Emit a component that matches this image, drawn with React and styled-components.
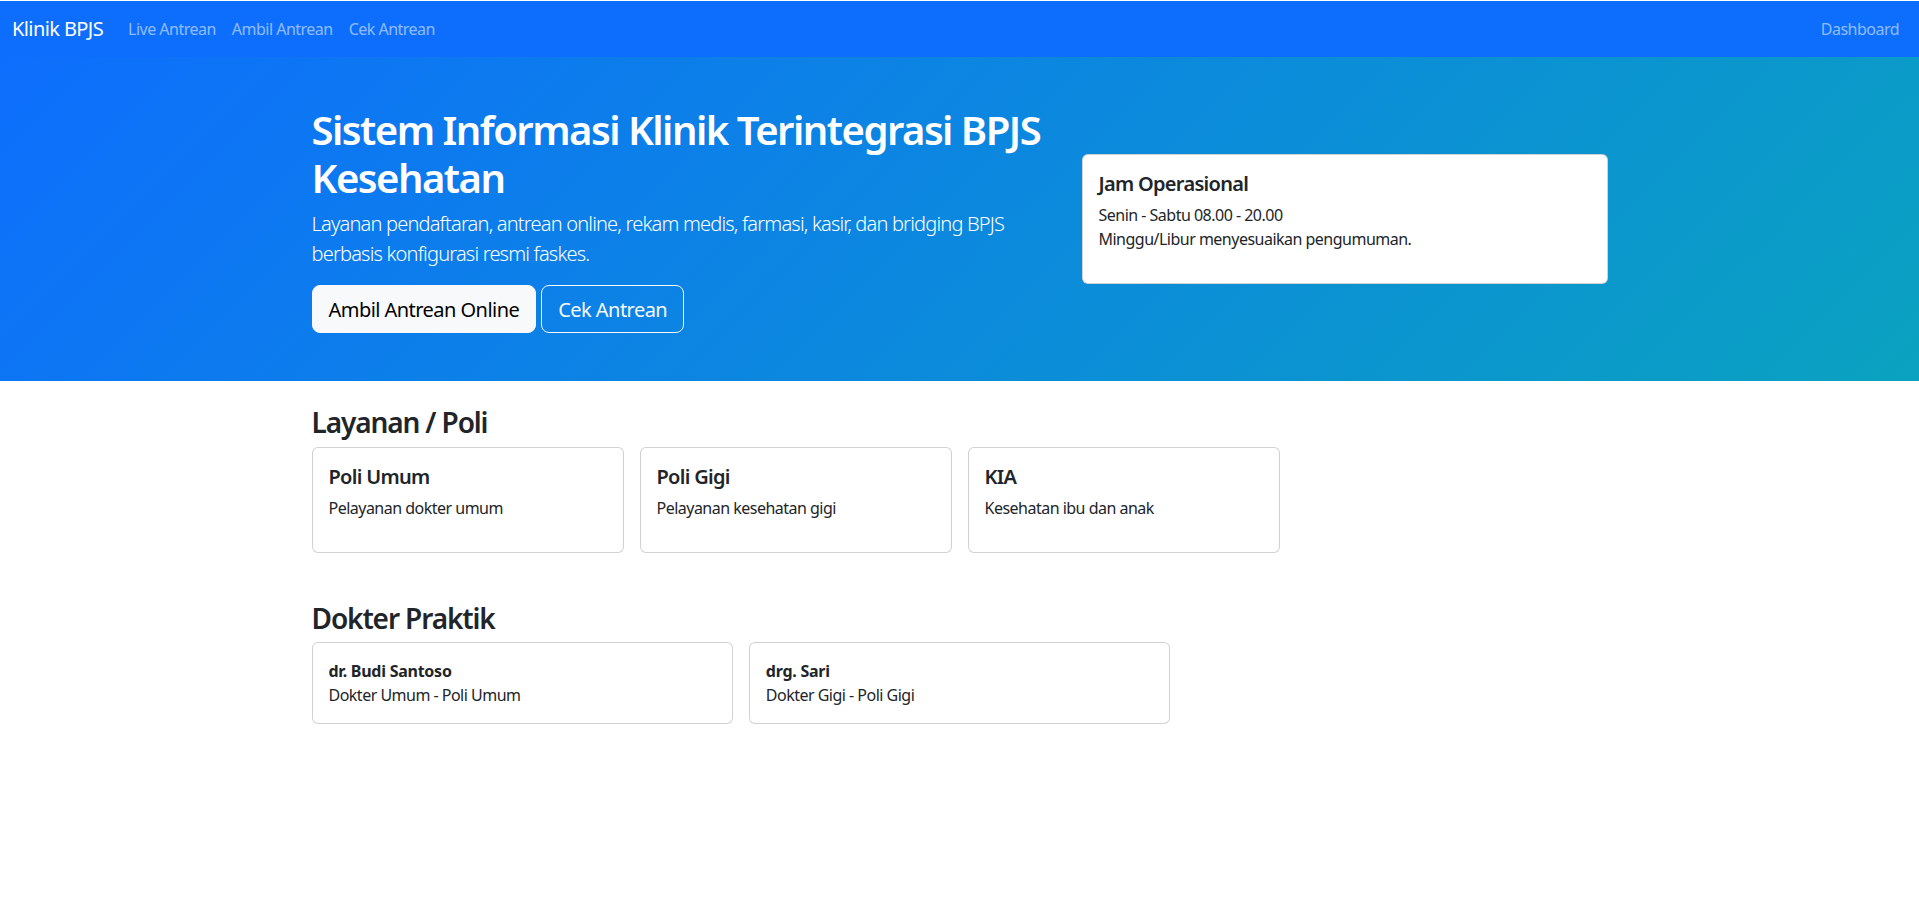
import React from 'react';
import styled, { createGlobalStyle } from 'styled-components';

const GlobalStyle = createGlobalStyle`
  * {
    box-sizing: border-box;
  }
  body {
    margin: 0;
    padding-top: 1px;
    background: #fff;
    color: #212529;
    font-family: "Noto Sans", "Open Sans", sans-serif;
    font-size: 16px;
    line-height: 1.5;
    letter-spacing: -0.032em;
  }
`;

const Navbar = styled.nav`
  display: flex;
  align-items: center;
  justify-content: space-between;
  height: 56px;
  padding: 8px 12px;
  background-color: #0d6efd;
`;

const NavLeft = styled.div`
  display: flex;
  align-items: center;
`;

const Brand = styled.a`
  margin-right: 17px;
  padding: 5px 0;
  font-size: 20px;
  letter-spacing: -0.03em;
  color: #fff;
  text-decoration: none;
`;

const NavLink = styled.a`
  padding: 8px;
  color: rgba(255, 255, 255, 0.55);
  text-decoration: none;
`;

const Hero = styled.section`
  padding: 48px 0;
  color: #fff;
  background: linear-gradient(135deg, #0d6efd, #0aa2c0);
`;

const Container = styled.div`
  width: 1320px;
  margin: 0 auto;
  padding: 0 12px;
`;

const HeroRow = styled.div`
  display: grid;
  grid-template-columns: 746px 526px;
  column-gap: 24px;
  align-items: center;
`;

const HeroTitle = styled.h1`
  margin: 0 0 7px;
  padding-top: 1px;
  font-size: 40px;
  font-weight: 600;
  line-height: 1.2;
  letter-spacing: -0.0375em;
`;

const Lead = styled.p`
  margin: 0 0 16px;
  font-size: 20px;
  font-weight: 300;
  letter-spacing: -0.04em;
`;

const Actions = styled.div`
  display: flex;
  gap: 5px;
`;

const HeroButton = styled.a`
  padding: 9px 16px 7px;
  border: 1px solid #f8f9fa;
  border-radius: 8px;
  font-size: 20px;
  line-height: 30px;
  letter-spacing: -0.027em;
  color: ${(p) => (p.$light ? '#000' : '#f8f9fa')};
  background-color: ${(p) => (p.$light ? '#f8f9fa' : 'transparent')};
  text-decoration: none;
`;

const Card = styled.div`
  padding: 16px;
  border: 1px solid rgba(0, 0, 0, 0.176);
  border-radius: 6px;
  color: #212529;
  background-color: #fff;
`;

const CardTitle = styled.h5`
  margin: 0 0 7px;
  padding-top: 1px;
  font-size: 20px;
  font-weight: 600;
  line-height: 1.2;
  letter-spacing: -0.035em;
`;

const CardText = styled.p`
  margin: 0 0 16px;
`;

const Section = styled.section`
  padding: 24px 0;
`;

const SectionTitle = styled.h3`
  margin: 0 0 7px;
  padding-top: 1px;
  font-size: 28px;
  font-weight: 600;
  line-height: 1.2;
  letter-spacing: -0.04em;
`;

const CardGrid = styled.div`
  display: grid;
  grid-template-columns: repeat(12, 1fr);
  column-gap: 16px;
`;

const Col = styled.div`
  grid-column: span ${(p) => p.$span};
`;

const DoctorName = styled.div`
  font-weight: 700;
  letter-spacing: -0.016em;
`;

const services = [
  { name: 'Poli Umum', desc: 'Pelayanan dokter umum' },
  { name: 'Poli Gigi', desc: 'Pelayanan kesehatan gigi' },
  { name: 'KIA', desc: 'Kesehatan ibu dan anak' },
];

const doctors = [
  { name: 'dr. Budi Santoso', role: 'Dokter Umum - Poli Umum' },
  { name: 'drg. Sari', role: 'Dokter Gigi - Poli Gigi' },
];

export default function App() {
  return (
    <>
      <GlobalStyle />
      <Navbar>
        <NavLeft>
          <Brand href="#">Klinik BPJS</Brand>
          <NavLink href="#">Live Antrean</NavLink>
          <NavLink href="#">Ambil Antrean</NavLink>
          <NavLink href="#">Cek Antrean</NavLink>
        </NavLeft>
        <NavLink href="#">Dashboard</NavLink>
      </Navbar>
      <Hero>
        <Container>
          <HeroRow>
            <div>
              <HeroTitle>Sistem Informasi Klinik Terintegrasi BPJS Kesehatan</HeroTitle>
              <Lead>
                Layanan pendaftaran, antrean online, rekam medis, farmasi, kasir, dan bridging BPJS
                berbasis konfigurasi resmi faskes.
              </Lead>
              <Actions>
                <HeroButton href="#" $light>Ambil Antrean Online</HeroButton>
                <HeroButton href="#">Cek Antrean</HeroButton>
              </Actions>
            </div>
            <Card>
              <CardTitle>Jam Operasional</CardTitle>
              <CardText>
                Senin - Sabtu 08.00 - 20.00
                <br />
                Minggu/Libur menyesuaikan pengumuman.
              </CardText>
            </Card>
          </HeroRow>
        </Container>
      </Hero>
      <Container>
        <Section>
          <SectionTitle>Layanan / Poli</SectionTitle>
          <CardGrid>
            {services.map((s) => (
              <Col $span={3} key={s.name}>
                <Card>
                  <CardTitle>{s.name}</CardTitle>
                  <CardText>{s.desc}</CardText>
                </Card>
              </Col>
            ))}
          </CardGrid>
        </Section>
        <Section>
          <SectionTitle>Dokter Praktik</SectionTitle>
          <CardGrid>
            {doctors.map((d) => (
              <Col $span={4} key={d.name}>
                <Card>
                  <DoctorName>{d.name}</DoctorName>
                  <div>{d.role}</div>
                </Card>
              </Col>
            ))}
          </CardGrid>
        </Section>
      </Container>
    </>
  );
}
